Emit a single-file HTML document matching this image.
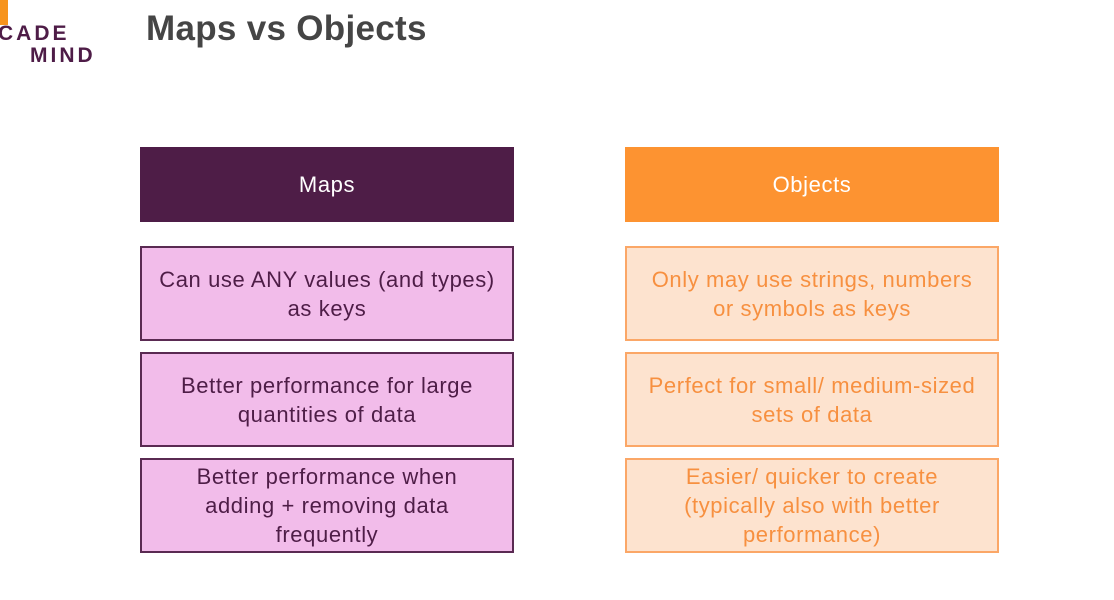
<!DOCTYPE html>
<html><head><style>
body{margin:0;width:1114px;height:600px;background:#fff;position:relative;overflow:hidden;font-family:"Liberation Sans",sans-serif}
.t{position:absolute;left:146px;top:9px;font-size:35px;font-weight:bold;color:#454545;letter-spacing:0.3px}
.logo{position:absolute;font-weight:bold;color:#4e1c47;font-size:21px;letter-spacing:3px}
.b{position:absolute;width:374px;box-sizing:border-box;display:flex;align-items:center;justify-content:center;text-align:center;font-size:22px;line-height:29px;letter-spacing:0.6px}
.h{height:75px;top:147px}
.m{left:140px}.o{left:625px}
.mh{background:#4e1d47;color:#fff}
.oh{background:#fd9331;color:#fff}
.mr{background:#f2bcea;border:2px solid #5a2a52;color:#4e1d47;height:95px}
.or{background:#fde3cf;border:2px solid #fba767;color:#f79040;height:95px}
</style></head><body>
<div style="position:absolute;left:0;top:0;width:8px;height:25px;background:#f7941d"></div>
<div class="logo" style="left:-2px;top:22px">CADE</div>
<div class="logo" style="left:30px;top:44px">MIND</div>
<div class="t">Maps vs Objects</div>
<div class="b h m mh">Maps</div>
<div class="b h o oh">Objects</div>
<div class="b m mr" style="top:246px">Can use ANY values (and types)<br>as keys</div>
<div class="b m mr" style="top:352px">Better performance for large<br>quantities of data</div>
<div class="b m mr" style="top:458px">Better performance when<br>adding + removing data<br>frequently</div>
<div class="b o or" style="top:246px">Only may use strings, numbers<br>or symbols as keys</div>
<div class="b o or" style="top:352px">Perfect for small/ medium-sized<br>sets of data</div>
<div class="b o or" style="top:458px">Easier/ quicker to create<br>(typically also with better<br>performance)</div>
</body></html>
